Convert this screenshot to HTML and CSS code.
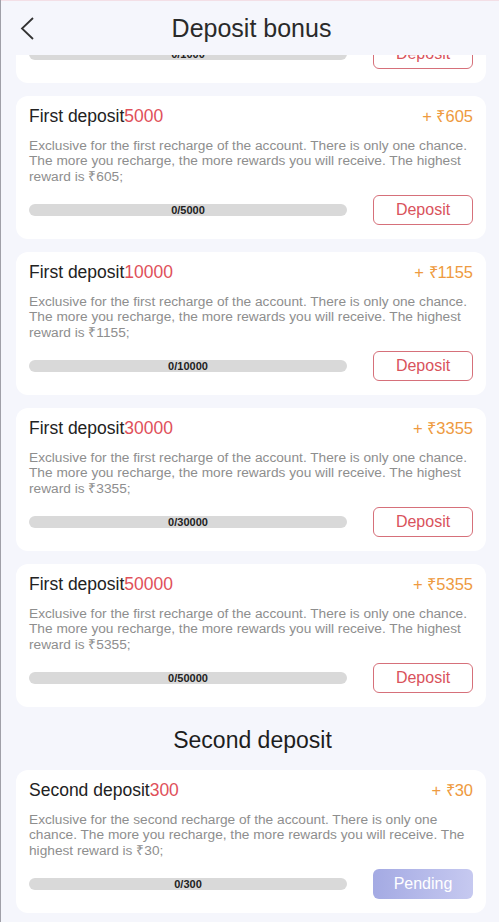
FILE: index.html
```html
<!DOCTYPE html>
<html lang="en">
<head>
<meta charset="utf-8">
<title>Deposit bonus</title>
<link rel="stylesheet" href="styles.css">
</head>
<body>
<header class="topbar">
  <svg class="back" width="20" height="30" viewBox="0 0 20 30"><polyline points="14,2 3,12.5 14,23" fill="none" stroke="#333" stroke-width="1.8"/></svg>
  <h1 class="topbar-title">Deposit bonus</h1>
</header>
<main class="list">
  <section class="card">
    <div class="card-head"><span class="card-title">First deposit<em>1000</em></span><span class="reward">+ ₹155</span></div>
    <p class="desc">Exclusive for the first recharge of the account. There is only one chance. The more you recharge, the more rewards you will receive. The highest reward is ₹155;</p>
    <div class="card-foot"><div class="bar">0/1000</div><button class="btn">Deposit</button></div>
  </section>
  <section class="card">
    <div class="card-head"><span class="card-title">First deposit<em>5000</em></span><span class="reward">+ ₹605</span></div>
    <p class="desc">Exclusive for the first recharge of the account. There is only one chance. The more you recharge, the more rewards you will receive. The highest reward is ₹605;</p>
    <div class="card-foot"><div class="bar">0/5000</div><button class="btn">Deposit</button></div>
  </section>
  <section class="card">
    <div class="card-head"><span class="card-title">First deposit<em>10000</em></span><span class="reward">+ ₹1155</span></div>
    <p class="desc">Exclusive for the first recharge of the account. There is only one chance. The more you recharge, the more rewards you will receive. The highest reward is ₹1155;</p>
    <div class="card-foot"><div class="bar">0/10000</div><button class="btn">Deposit</button></div>
  </section>
  <section class="card">
    <div class="card-head"><span class="card-title">First deposit<em>30000</em></span><span class="reward">+ ₹3355</span></div>
    <p class="desc">Exclusive for the first recharge of the account. There is only one chance. The more you recharge, the more rewards you will receive. The highest reward is ₹3355;</p>
    <div class="card-foot"><div class="bar">0/30000</div><button class="btn">Deposit</button></div>
  </section>
  <section class="card">
    <div class="card-head"><span class="card-title">First deposit<em>50000</em></span><span class="reward">+ ₹5355</span></div>
    <p class="desc">Exclusive for the first recharge of the account. There is only one chance. The more you recharge, the more rewards you will receive. The highest reward is ₹5355;</p>
    <div class="card-foot"><div class="bar">0/50000</div><button class="btn">Deposit</button></div>
  </section>
  <h2 class="section-title">Second deposit</h2>
  <section class="card">
    <div class="card-head"><span class="card-title">Second deposit<em>300</em></span><span class="reward">+ ₹30</span></div>
    <p class="desc">Exclusive for the second recharge of the account. There is only one chance. The more you recharge, the more rewards you will receive. The highest reward is ₹30;</p>
    <div class="card-foot"><div class="bar">0/300</div><button class="btn btn-pending">Pending</button></div>
  </section>
</main>
<script src="script.js"></script>
</body>
</html>
```
FILE: styles.css
```css
* { box-sizing: border-box; }
html, body { margin: 0; padding: 0; }
body {
  background: #f5f6fc;
  font-family: Arial, "Liberation Sans", sans-serif;
  color: #222;
  border-left: 1px solid #a0a0a8;
  border-top: 1px solid #f3dfe6;
}
.topbar {
  position: fixed;
  top: 0; left: 1px; right: 0;
  height: 55px;
  background: #f5f6fc;
  display: flex;
  align-items: center;
  justify-content: center;
  z-index: 2;
  border-top: 1px solid #f3dfe6;
}
.back { position: absolute; left: 18px; top: 15px; }
.topbar-title {
  margin: 0;
  font-size: 25px;
  font-weight: normal;
  color: #2a2a2a;
  padding-left: 3px;
}
.list {
  padding: 67px 13px 40px 15px;
  display: flex;
  flex-direction: column;
  gap: 13px;
}
.card {
  background: #fff;
  border-radius: 12px;
  padding: 10px 13px 14px;
}
.card-head {
  display: flex;
  justify-content: space-between;
  align-items: baseline;
  line-height: 21.6px;
}
.card-title { font-size: 17.5px; color: #222; }
.card-title em { font-style: normal; color: #e0505a; }
.reward { font-size: 16.5px; color: #ee9a40; }
.desc {
  margin: 10px 0 0;
  font-size: 13.7px;
  line-height: 15.5px;
  color: #8e8e8e;
}
.card-foot {
  margin-top: 11px;
  display: flex;
  align-items: center;
  justify-content: space-between;
}
.bar {
  width: 318px;
  height: 12px;
  border-radius: 6px;
  background: #d9d9d9;
  font-size: 11px;
  font-weight: bold;
  line-height: 12px;
  text-align: center;
  color: #222;
}
.btn {
  width: 100px;
  height: 30px;
  border: 1px solid #d6707a;
  border-radius: 6px;
  background: #fff;
  color: #d9535c;
  font-family: inherit;
  font-size: 16px;
  padding: 0;
}
.btn-pending {
  border: none;
  background: linear-gradient(90deg, #a4aae3, #c6c9f0);
  color: #fff;
}
.section-title {
  margin: 7px 0 2px;
  text-align: center;
  font-size: 23px;
  font-weight: normal;
  line-height: 27.6px;
  color: #1e1e1e;
  padding-left: 3px;
}
```
FILE: script.js
```js
window.scrollTo(0, 128);
```
